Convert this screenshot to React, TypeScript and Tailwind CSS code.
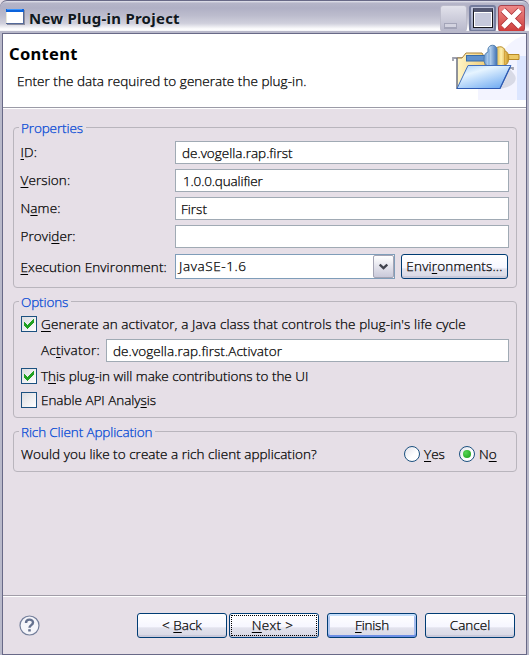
import type { ReactNode } from 'react';

function Field({ label, value, pad = 'pl-[6px]' }: { label: ReactNode; value?: string; pad?: string }) {
  return (
    <div className="flex h-[23px] items-center">
      <div className="w-[155px] shrink-0 pl-[0.500px] tracking-[0.100px]">{label}</div>
      <div className={`h-[23px] w-[334px] border border-[#a0aab4] bg-white leading-[22px] ${pad}`}>{value}</div>
    </div>
  );
}

function Group({ title, className, children }: { title: ReactNode; className: string; children: ReactNode }) {
  return (
    <div className={`relative ml-[10px] w-[504px] rounded-[4px] border border-[#b9b5bd] ${className}`}>
      <div className="absolute -top-[9px] left-[5px] bg-[#e6dfe7] pr-[3px] pl-[2px] leading-[18px] tracking-[-0.120px] text-[#0046d5]">{title}</div>
      {children}
    </div>
  );
}

function Check({ checked = false }: { checked?: boolean }) {
  return (
    <span className="flex size-4 shrink-0 items-center justify-center border border-[#1c5180] bg-linear-to-br from-[#dcdce0] to-white">
      {checked && (
        <svg width="12" height="12" viewBox="0 0 12 12" shapeRendering="crispEdges">
          <path d="M1 3v4l3.500 4L11 4.500V1L4.500 7Z" fill="#21a121" />
        </svg>
      )}
    </span>
  );
}

function Radio({ checked = false }: { checked?: boolean }) {
  return (
    <span className="flex size-4 shrink-0 items-center justify-center rounded-full border border-[#1c5180] bg-linear-to-br from-[#e2e2ea] to-white to-60%">
      {checked && <span className="size-2 rounded-full bg-radial-[at_35%_35%] from-[#56d653] to-[#199a19]" />}
    </span>
  );
}

function Button({ children, kind = 'plain', className = 'w-[90px]' }: { children: ReactNode; kind?: 'plain' | 'focus' | 'default'; className?: string }) {
  const shade = kind === 'default' ? 'shadow-[inset_0_2px_0_#c5dffb,inset_0_-2px_0_#6d8fe6,inset_2px_0_0_#b3c8f0,inset_-2px_0_0_#a5bcee]' : 'shadow-[inset_0_-2px_0_#c9c9da]';
  return (
    <div className={`relative flex h-[25px] shrink-0 items-center justify-center rounded-[3px] border border-[#003c74] bg-[linear-gradient(#ffffff_0%,#f6f6ff_56%,#e2e2ed_60%,#d8d8e4_100%)] ${shade} ${className}`}>
      {kind === 'focus' && <span className="absolute inset-[1px] border border-dotted border-black" />}
      <span>{children}</span>
    </div>
  );
}

function TitleIcon() {
  return (
    <svg width="19" height="17" viewBox="0 0 19 17" shapeRendering="crispEdges">
      <path d="M1 1h18v15H1z" fill="#8d8e9e" />
      <path d="M0 0h18v15H0z" fill="#ece9d8" />
      <path d="M1 2h16v13H1z" fill="#fff" />
      <path d="M0 0h18v3H0z" fill="#0c63dc" />
      <path d="M1 0h15v1H1z" fill="#3b96ff" />
      <path d="M0 14h18v1H0zM17 3h1v12h-1z" fill="#53699a" />
    </svg>
  );
}

function Banner() {
  return (
    <svg width="77" height="72" viewBox="0 0 77 72">
      <defs>
        <linearGradient id="front" x1="0" y1="0" x2="0.7" y2="1">
          <stop offset="0" stopColor="#a5d0fa" />
          <stop offset=".35" stopColor="#e6f4ff" />
          <stop offset="1" stopColor="#78b0f3" />
        </linearGradient>
        <linearGradient id="back" x1="0" x2="1">
          <stop offset="0" stopColor="#fff6c8" />
          <stop offset="1" stopColor="#f0cf7c" />
        </linearGradient>
        <linearGradient id="blue" x1="0" x2="1">
          <stop offset="0" stopColor="#5f92cf" />
          <stop offset=".4" stopColor="#c3ddf6" />
          <stop offset="1" stopColor="#3e70b4" />
        </linearGradient>
        <linearGradient id="gold" x1="0" x2="1">
          <stop offset="0" stopColor="#e0b23e" />
          <stop offset=".4" stopColor="#fff0ac" />
          <stop offset="1" stopColor="#c8931d" />
        </linearGradient>
      </defs>
      <path d="M77 1C62 5 53 15 49 30l-20 16v20h48Z" fill="#f3f4ff" />
      <path d="M68 22h9v44h-9z" fill="#dce6ff" />
      <path d="M50 55 61 35l4 5c6 8-5 14-15 15Z" fill="#cfd1de" opacity=".75" />
      <path d="M4 27v-3h12M14 34h50v2" fill="none" stroke="#a0a2ae" strokeWidth="1.800" />
      <path d="M8 55V24h5l4-5h16l3 5v13H21Z" fill="url(#back)" stroke="#a9823a" />
      <path d="M8 55V24" stroke="#4b67a5" />
      <rect x="17.500" y="21.500" width="20" height="5.500" fill="#5f91cd" stroke="#376ba9" />
      <path d="M58 20.500h12v5H58z" fill="#edc965" stroke="#b98a25" />
      <path d="M47 14c5-3 9 0 9 3 5 1 5 13 0 14 0 2-4 3-9 2Z" fill="url(#gold)" stroke="#b88c2d" />
      <path d="M55.500 17v14" stroke="#d5a33b" />
      <path d="M39 15c1-5 8-5 9 0v17H39c-5-1-6-12 0-14Z" fill="url(#blue)" stroke="#527fae" />
      <path d="M40 15v16" stroke="#6999cf" />
      <path d="M19 31.500h43L51 54.500H8Z" fill="url(#front)" stroke="#426fbc" />
      <path d="M8 54.500h43L61 33" fill="none" stroke="#2d59b2" strokeWidth="1.200" />
    </svg>
  );
}

export default function App() {
  return (
    <div className="flex h-[655px] w-[529px] flex-col overflow-hidden bg-[#e6dfe7] font-['Open_Sans','Noto_Sans',sans-serif] text-[13.5px] font-light whitespace-nowrap text-black [-webkit-text-stroke:0.250px] [text-underline-offset:2px]">
      <header className="flex h-[33px] shrink-0 items-center rounded-t-[7px] border-t border-[#686987] bg-[linear-gradient(#e5e5ee_0%,#b5b5c8_7%,#b0b0c5_22%,#bcbccd_45%,#d0d0dc_70%,#ffffff_88%,#e2e2ec_100%)] pr-[4px] pl-[6px]">
        <TitleIcon />
        <h1 className="ml-[4px] flex-1 pt-[2px] font-['Noto_Sans',sans-serif] text-[15px] font-bold tracking-[0.240px] text-[#101820] [-webkit-text-stroke:0] [text-shadow:1px_1px_0_#d9d9e4]">New Plug-in Project</h1>
        <div className="flex gap-[2px] pt-[2px]">
          <div className="h-[27px] w-[27px] rounded-[3px] border border-[#bcbccb] bg-linear-to-b from-[#e2e2eb] to-[#b9b9cc] pt-[17px] pl-[3px]">
            <div className="h-[6px] w-[13px] border border-b-2 border-[#a3a4b8] bg-[#d3d3e0]" />
          </div>
          <div className="flex h-[27px] w-[27px] items-center justify-center rounded-[3px] border-2 border-[#747c9d] bg-linear-to-b from-[#c1c5dc] to-[#9da5c2]">
            <div className="h-[20px] w-[20px] border border-t-[4px] border-[#17171e] border-t-[#545872] bg-[#c6c9dc] shadow-[inset_1px_1px_0_white,inset_-1px_-1px_0_white]" />
          </div>
          <div className="flex h-[27px] w-[27px] items-center justify-center rounded-[3px] border border-[#a7434e] bg-linear-to-b from-[#ed8888] to-[#ce3c3c]">
            <svg width="23" height="23" viewBox="0 0 23 23"><path d="m3 3 17 17M20 3 3 20" stroke="#a92b33" strokeWidth="6.500" /><path d="m3 3 17 17M20 3 3 20" stroke="white" strokeWidth="5" /></svg>
          </div>
        </div>
      </header>

      <div className="mx-[2px] flex min-h-0 flex-1 flex-col border border-[#686987] shadow-[0_0_0_2px_#b9b9ca]">
        <section className="flex h-[74px] shrink-0 justify-between border-b border-[#9b9ba7] bg-white">
          <div className="pl-[6px]">
            <h2 className="pt-[8px] font-['Noto_Sans',sans-serif] text-[16.5px] leading-[24px] font-bold tracking-[0.300px] [-webkit-text-stroke:0]">Content</h2>
            <p className="pt-[5px] pl-[8px] leading-[20px] tracking-[0.040px]">Enter the data required to generate the plug-in.</p>
          </div>
          <Banner />
        </section>

        <main className="flex flex-1 flex-col border-t border-white">
          <Group title="Properties" className="mt-[18px] h-[161px] pt-[13px] pl-[6px]">
            <div className="flex flex-col gap-[5px]">
              <Field label={<><u>I</u>D:</>} value="de.vogella.rap.first" />
              <Field label={<><u>V</u>ersion:</>} value="1.0.0.qualifier" pad="pl-[7px] tracking-[-0.150px]" />
              <Field label={<>N<u>a</u>me:</>} value="First" pad="pl-[5px]" />
              <Field label={<>Provi<u>d</u>er:</>} />
            </div>
            <div className="mt-[6px] flex h-[25px] items-center">
              <div className="w-[155px] shrink-0 pt-px pl-[0.500px] tracking-[0.120px]"><u>E</u>xecution Environment:</div>
              <div className="flex h-[25px] w-[220px] items-center justify-between border border-[#7f9db9] bg-white pl-[3px]">
                <span className="tracking-[0.600px]">JavaSE-1.6</span>
                <span className="flex h-[23px] w-[21px] items-center justify-center rounded-[2px] border border-[#a4a4b4] bg-linear-to-b from-white to-[#c9c9da]">
                  <svg width="9" height="7" viewBox="0 0 9 7"><path d="M.7 1.500 4.500 5.200l3.800-3.700" fill="none" stroke="#40434d" strokeWidth="2.400" /></svg>
                </span>
              </div>
              <Button className="ml-[6px] w-[107px] tracking-[0.180px]">Envi<u>r</u>onments...</Button>
            </div>
          </Group>

          <Group title="Options" className="mt-[13px] h-[117px] pt-[14px] pl-[7px]">
            <div className="flex h-4 items-center gap-[4px]"><Check checked /><span className="tracking-[0.110px]"><u>G</u>enerate an activator, a Java class that controls the plug-in's life cycle</span></div>
            <div className="mt-[7px] flex h-[23px] items-center pl-[20px]">
              <div className="w-[65px] shrink-0 tracking-[0.250px]">Ac<u>t</u>ivator:</div>
              <div className="h-[23px] w-[403px] border border-[#a0aab4] bg-white pl-[6px] leading-[22px] tracking-[0.070px]">de.vogella.rap.first.Activator</div>
            </div>
            <div className="mt-[6px] flex h-4 items-center gap-[4px]"><Check checked /><span className="tracking-[-0.030px]">T<u>h</u>is plug-in will make contributions to the UI</span></div>
            <div className="mt-[8px] flex h-4 items-center gap-[4px]"><Check /><span className="tracking-[-0.030px]">Enable API Analy<u>s</u>is</span></div>
          </Group>

          <Group title="Rich Client Application" className="mt-[13px] flex h-[41px] items-center pt-[5px] pl-[7px]">
            <div className="w-[383px] tracking-[0.030px]">Would you like to create a rich client application?</div>
            <div className="flex w-[55px] items-center gap-[4px]"><Radio /><span><u>Y</u>es</span></div>
            <div className="flex items-center gap-[4px]"><Radio checked /><span>N<u>o</u></span></div>
          </Group>
        </main>

        <footer className="flex h-[59px] shrink-0 items-center border-t border-[#a19da8] pl-[16px] shadow-[inset_0_1px_0_white]">
          <svg width="21" height="21" viewBox="0 0 21 21">
            <circle cx="10.500" cy="10.500" r="9.500" fill="#f5f5fa" stroke="#747f9b" strokeWidth="1.200" />
            <path d="M7 8C7 3.500 14 3.700 14 7.500c0 2.700-3.500 2.600-3.500 5.300" fill="none" stroke="#65718f" strokeWidth="2.400" />
            <path d="M9.200 14.200h2.600v2.300H9.200z" fill="#65718f" />
          </svg>
          <div className="ml-[97px] flex">
            <Button>&lt; <u>B</u>ack</Button>
            <Button kind="focus" className="ml-[2px] w-[90px] pr-[3px] tracking-[0.300px]"><u>N</u>ext &gt;</Button>
            <Button kind="default" className="ml-[8px] w-[90px] tracking-[-0.200px]"><u>F</u>inish</Button>
            <Button className="ml-[8px] w-[90px]">Cancel</Button>
          </div>
        </footer>
      </div>
    </div>
  );
}
